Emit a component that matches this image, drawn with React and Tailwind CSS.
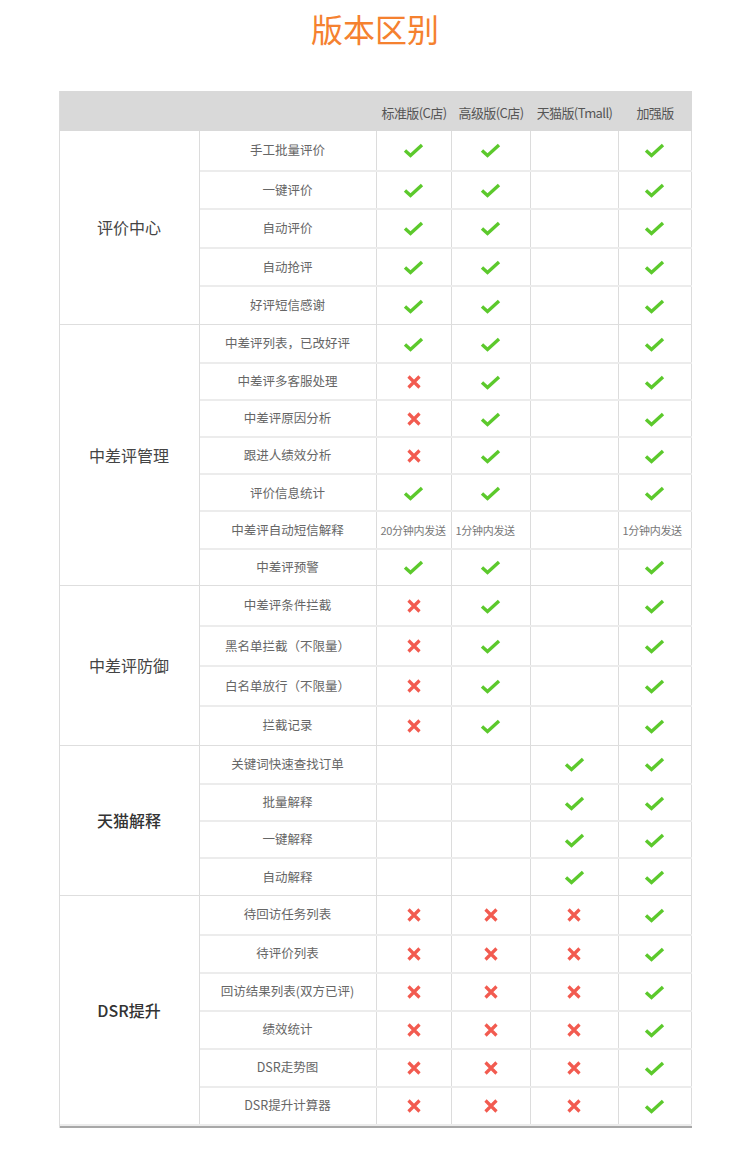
const Check = () => (
  <svg width="21" height="16" viewBox="0 0 21 16">
    <path d="M2 8.5 L7.5 13.5 L19 3" fill="none" stroke="#5cc92c" strokeWidth="3.4" />
  </svg>
);

const Cross = () => (
  <svg width="16" height="16" viewBox="0 0 16 16">
    <path d="M2.5 2.5 L13.5 13.5 M13.5 2.5 L2.5 13.5" fill="none" stroke="#f25b50" strokeWidth="3.2" />
  </svg>
);

const groups = [
  {
    name: "评价中心",
    h: "h-[38.6px]",
    rows: [
      ["手工批量评价", "Y", "Y", "", "Y"],
      ["一键评价", "Y", "Y", "", "Y"],
      ["自动评价", "Y", "Y", "", "Y"],
      ["自动抢评", "Y", "Y", "", "Y"],
      ["好评短信感谢", "Y", "Y", "", "Y"],
    ],
  },
  {
    name: "中差评管理",
    h: "h-[37.1px]",
    rows: [
      ["中差评列表，已改好评", "Y", "Y", "", "Y"],
      ["中差评多客服处理", "X", "Y", "", "Y"],
      ["中差评原因分析", "X", "Y", "", "Y"],
      ["跟进人绩效分析", "X", "Y", "", "Y"],
      ["评价信息统计", "Y", "Y", "", "Y"],
      ["中差评自动短信解释", "20分钟内发送", "1分钟内发送", "", "1分钟内发送"],
      ["中差评预警", "Y", "Y", "", "Y"],
    ],
  },
  {
    name: "中差评防御",
    h: "h-[39.75px]",
    rows: [
      ["中差评条件拦截", "X", "Y", "", "Y"],
      ["黑名单拦截（不限量）", "X", "Y", "", "Y"],
      ["白名单放行（不限量）", "X", "Y", "", "Y"],
      ["拦截记录", "X", "Y", "", "Y"],
    ],
  },
  {
    name: "天猫解释",
    h: "h-[37.25px]",
    strong: true,
    rows: [
      ["关键词快速查找订单", "", "", "Y", "Y"],
      ["批量解释", "", "", "Y", "Y"],
      ["一键解释", "", "", "Y", "Y"],
      ["自动解释", "", "", "Y", "Y"],
    ],
  },
  {
    name: "DSR提升",
    h: "h-[38px]",
    strong: true,
    rows: [
      ["待回访任务列表", "X", "X", "X", "Y"],
      ["待评价列表", "X", "X", "X", "Y"],
      ["回访结果列表(双方已评)", "X", "X", "X", "Y"],
      ["绩效统计", "X", "X", "X", "Y"],
      ["DSR走势图", "X", "X", "X", "Y"],
      ["DSR提升计算器", "X", "X", "X", "Y"],
    ],
  },
];

const widths = ["w-[75px]", "w-[79px]", "w-[88px]", "w-[73px]"];

const Cell = ({ value, width }) => {
  if (value === "Y" || value === "X") {
    return (
      <div className={`${width} shrink-0 border-r border-[#dcdcdc] flex items-center justify-center`}>
        {value === "Y" ? <Check /> : <Cross />}
      </div>
    );
  }
  return (
    <div className={`${width} shrink-0 border-r border-[#dcdcdc] flex items-center pl-[4px] text-[11px] text-[#777] whitespace-nowrap tracking-[-0.3px]`}>
      {value}
    </div>
  );
};

export default function App() {
  return (
    <div className="w-[750px] h-[1162px] bg-white font-['Noto_Sans_CJK_SC','Noto_Sans',sans-serif]">
      <h1 className="pt-[8px] text-center text-[32px] leading-[40px] text-[#f5812f] font-normal">版本区别</h1>
      <div className="w-[633px] mx-auto mt-[43px] border-l border-[#dcdcdc]">
        <div className="flex h-[40px] bg-[#d9d9d9] text-[13px] text-[#555] tracking-[-0.6px]">
          <div className="w-[317px] shrink-0" />
          <div className="w-[75px] shrink-0 flex items-center justify-center pt-1">标准版(C店)</div>
          <div className="w-[79px] shrink-0 flex items-center justify-center pt-1">高级版(C店)</div>
          <div className="w-[88px] shrink-0 flex items-center justify-center pt-1">天猫版(Tmall)</div>
          <div className="w-[73px] shrink-0 flex items-center justify-center pt-1">加强版</div>
        </div>
        {groups.map((g, gi) => (
          <div key={g.name} className={`flex ${gi > 0 ? "border-t border-[#dedede]" : ""}`}>
            <div
              className={`w-[140px] shrink-0 border-r border-[#dcdcdc] flex items-center justify-center text-[16px] ${g.strong ? "text-[#333] font-medium" : "text-[#444]"}`}
            >
              {g.name}
            </div>
            <div className="flex-1 flex flex-col">
              {g.rows.map((r, ri) => (
                <div
                  key={r[0]}
                  className={`flex ${g.h} ${ri > 0 ? "border-t-2 border-[#ececec]" : ""}`}
                >
                  <div className="w-[177px] shrink-0 border-r border-[#dcdcdc] flex items-center justify-center text-[12.5px] text-[#666] whitespace-nowrap">
                    {r[0]}
                  </div>
                  {r.slice(1).map((v, i) => (
                    <Cell key={i} value={v} width={widths[i]} />
                  ))}
                </div>
              ))}
            </div>
          </div>
        ))}
        <div className="h-[2px] bg-[#ececec]" />
        <div className="h-[2px] bg-[#a8a8a8]" />
      </div>
    </div>
  );
}
